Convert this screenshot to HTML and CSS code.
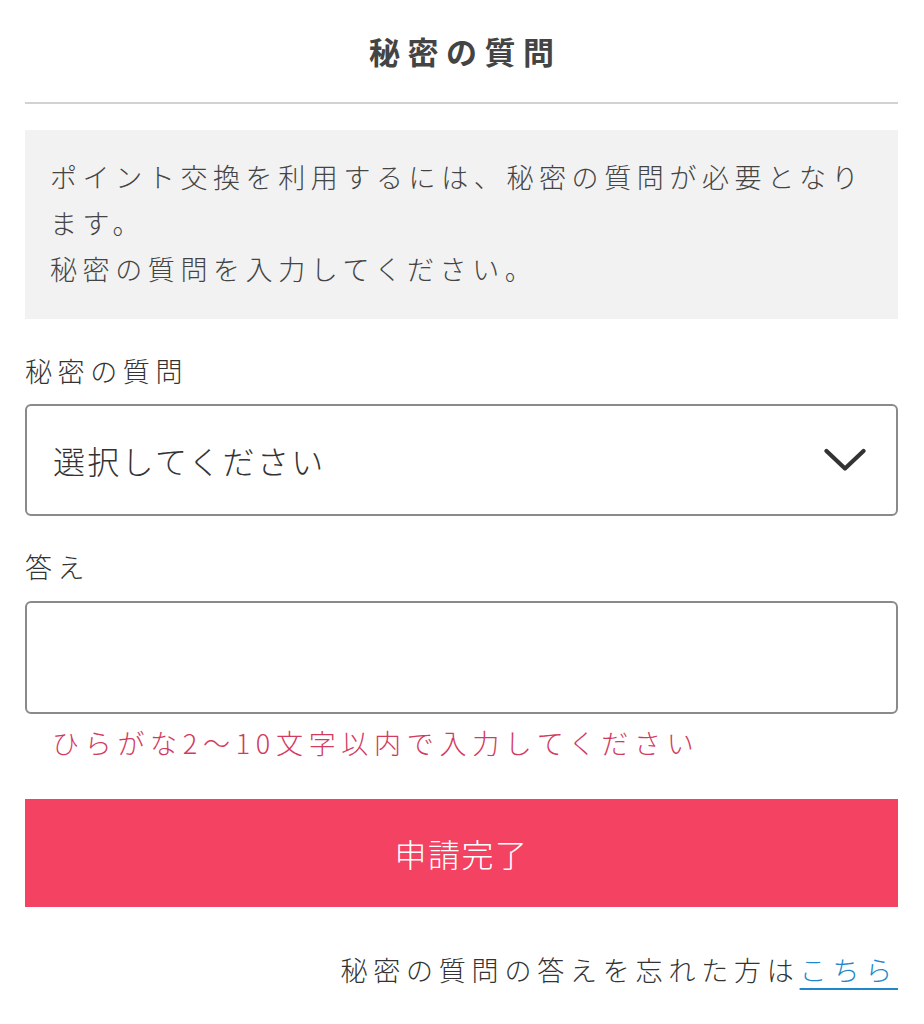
FILE: index.html
```html
<!DOCTYPE html>
<html lang="ja">
<head>
<meta charset="utf-8">
<link rel="stylesheet" href="styles.css">
</head>
<body>
<div class="page">
  <h1 class="title">秘密の質問</h1>
  <hr class="divider">
  <div class="notice">
    <p>ポイント交換を利用するには、秘密の質問が必要となります。</p>
    <p>秘密の質問を入力してください。</p>
  </div>
  <label class="label">秘密の質問</label>
  <div class="select">
    <span class="select-text">選択してください</span>
    <svg class="chevron" width="42" height="24" viewBox="0 0 42 24"><path d="M2.5 3 L21 20.5 L39.5 3" fill="none" stroke="#333" stroke-width="4.2" stroke-linecap="round" stroke-linejoin="round"/></svg>
  </div>
  <label class="label label-answer">答え</label>
  <div class="input"></div>
  <p class="error">ひらがな2〜10文字以内で入力してください</p>
  <button class="submit">申請完了</button>
  <p class="forgot">秘密の質問の答えを忘れた方は<a href="#">こちら</a></p>
</div>
</body>
</html>
```

FILE: styles.css
```css
html, body {
  margin: 0;
  padding: 0;
  background: #fff;
}
body {
  font-family: "Noto Sans CJK JP", "Noto Sans", sans-serif;
  font-weight: 300;
  color: #333;
}
.page {
  padding: 0 26px 0 25px;
  display: flex;
  flex-direction: column;
}
.title {
  margin: 0;
  padding-top: 27px;
  height: 50px;
  text-align: center;
  font-size: 31px;
  line-height: 48px;
  font-weight: 700;
  letter-spacing: 7.5px;
  text-indent: 7.5px;
  color: #444;
}
.divider {
  margin: 25px 0 0;
  border: 0;
  border-top: 2px solid #d2d2d2;
  height: 0;
}
.notice {
  margin-top: 26px;
  background: #f2f2f2;
  padding: 24px 25px 22px;
  height: 143px;
}
.notice p {
  margin: 0;
  font-size: 27px;
  line-height: 46px;
  letter-spacing: 5.6px;
  color: #444;
}
.label {
  margin-top: 32px;
  font-size: 27px;
  line-height: 40px;
  letter-spacing: 5.6px;
  color: #333;
}
.label-answer {
  margin-top: 31px;
}
.select {
  margin-top: 13px;
  height: 108px;
  border: 2px solid #8a8a8a;
  border-radius: 6px;
  display: flex;
  align-items: center;
  justify-content: space-between;
  padding: 0 30px 0 26px;
}
.select-text {
  font-size: 32px;
  letter-spacing: 2.3px;
  color: #333;
}
.chevron {
  display: block;
}
.input {
  margin-top: 14px;
  height: 109px;
  border: 2px solid #8a8a8a;
  border-radius: 6px;
}
.error {
  margin: 9px 0 0 27px;
  font-size: 27px;
  line-height: 40px;
  letter-spacing: 5.7px;
  color: #d23b5e;
}
.submit {
  margin-top: 36px;
  height: 108px;
  border: 0;
  background: #f44262;
  color: #fff;
  font-family: inherit;
  font-weight: 300;
  font-size: 32px;
  letter-spacing: 1.5px;
  padding: 0;
}
.forgot {
  margin: 43px 0 0;
  text-align: right;
  font-size: 27px;
  line-height: 40px;
  letter-spacing: 5.8px;
  color: #333;
}
.forgot a {
  color: #1f88cc;
  text-decoration: underline;
  text-underline-offset: 7px;
  text-decoration-thickness: 2px;
}
```
